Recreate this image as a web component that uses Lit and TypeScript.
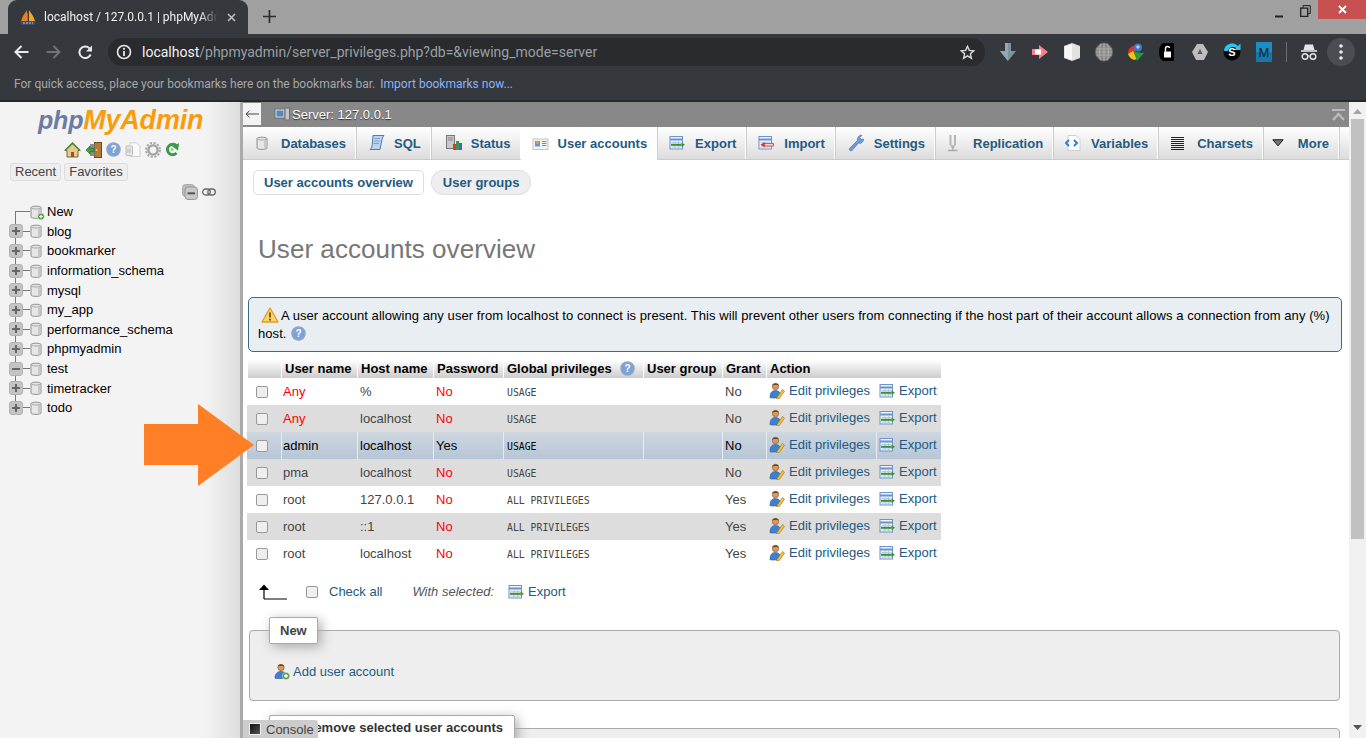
import { LitElement, html, css, svg } from 'lit';
import { customElement } from 'lit/decorators.js';

const box = (w: number, h: number, body: unknown) =>
  html`<svg class="ic" width=${w} height=${h} viewBox="0 0 ${w} ${h}">${body}</svg>`;

// small phpMyAdmin icons, all drawn on a 16 box
const dbShape = svg`<path d="M2 3.5C2 1.8 12 1.8 12 3.5V13C12 14.8 2 14.8 2 13Z" fill="#e6e6e6" stroke="#8f8f8f"/><path d="M2.5 4C4 5.4 10 5.4 11.5 4" fill="none" stroke="#aaa"/><path d="M9 5V13.5L11.5 13V5Z" fill="#c8c8c8"/>`;
const icons: Record<string, unknown> = {
  db: box(16, 16, dbShape),
  dbnew: box(16, 16, svg`${dbShape}<circle cx="12" cy="12.5" r="3.4" fill="#4f9a3a" stroke="#e8f5e0" stroke-width=".7"/><path d="M10.2 12.5H13.8M12 10.7V14.3" stroke="#fff" stroke-width="1.2"/>`),
  sql: box(18, 18, svg`<path d="M5 1.5H16C14.5 3 14 5 13.5 8L12 15.5H2C3.5 14.5 4 12.5 4.3 10Z" fill="#bcd2ee" stroke="#4e79b8"/><path d="M6.5 4.5H12M6 7H11.5M5.5 9.5H11" stroke="#7fa1d2"/>`),
  status: box(18, 18, svg`<rect x="1.5" y="1.5" width="8" height="13" fill="#c9c9c9" stroke="#777"/><path d="M3 4H8M3 6H8" stroke="#888"/><rect x="8" y="10" width="3" height="6" fill="#d33b2c"/><rect x="11" y="7" width="3" height="9" fill="#3b9a42"/><rect x="14" y="9" width="3" height="7" fill="#3b68c9"/>`),
  users: box(17, 16, svg`<path d="M1 3H16V13.5H1Z" fill="#f4f4f4" stroke="#c2c2c2"/><rect x="3" y="5" width="5" height="5.5" fill="#6d93c9"/><circle cx="5.5" cy="6.7" r="1.4" fill="#e0a04d"/><path d="M10 5.5H14.5M10 7.5H14.5M10 9.5H14.5" stroke="#8a8a8a"/>`),
  export: box(16, 16, svg`<rect x="1" y="1.5" width="12.5" height="12.5" fill="#eef3fb" stroke="#6d93c9"/><path d="M1 4.5H13.5" stroke="#6d93c9" stroke-width="2"/><path d="M2.5 7.5H12M2.5 12H12M6 6V13.5M9.5 6V13.5" stroke="#a9c1e2" stroke-width=".8"/><path d="M2 9.8H12.5" stroke="#3f8f2d" stroke-width="2"/><path d="M12.5 7.5L16 9.8L12.5 12Z" fill="#3f8f2d"/>`),
  import: box(16, 16, svg`<rect x="1" y="1.5" width="12.5" height="12.5" fill="#eef3fb" stroke="#6d93c9"/><path d="M1 4.5H13.5" stroke="#6d93c9" stroke-width="2"/><path d="M2.5 7.5H12M2.5 12H12" stroke="#a9c1e2" stroke-width=".8"/><path d="M6 8.6H15.5V11H6Z" fill="#fbe3e0" stroke="#d8352a" stroke-width=".9"/><path d="M6.5 7L2.5 9.8L6.5 12.5Z" fill="#d8352a"/>`),
  settings: box(17, 18, svg`<path d="M1.5 14.5L9.5 6.5C9 3.5 11 1 14 1.2L11.8 3.6L13 5.5L15.4 5C15.8 7.8 13 10 10.5 9L4 16.5C2.5 17.5 .8 16 1.5 14.5Z" fill="#6f9bd8" stroke="#4672ad" stroke-width=".7"/>`),
  replication: box(12, 18, svg`<path d="M3.5 1V11M8 1V11" stroke="#b5b5b5" stroke-width="2"/><path d="M3 11H8.5L7 14H4.5Z" fill="#bbb"/><path d="M5.8 13V16M1 16.5H10.5" stroke="#aaa" stroke-width="1.4"/>`),
  variables: box(16, 18, svg`<path d="M3 1.5H11L15 5V16.5H3Z" fill="#fff" stroke="#cfcfcf"/><path d="M4 6L1 9L4 12M9 6L12 9L9 12" fill="none" stroke="#2f7ee0" stroke-width="2"/>`),
  charsets: box(13, 14, svg`<path d="M0 1.5H13M0 3.5H13M0 5.5H13M0 7.5H13M0 9.5H13M0 11.5H13M0 13.5H13" stroke="#222"/>`),
  more: box(12, 8, svg`<path d="M.8 .8H11.2L6 6.8Z" fill="#777" stroke="#111"/>`),
  edit: box(16, 17, svg`<circle cx="6.5" cy="4.5" r="3.2" fill="#d9995c" stroke="#80532a" stroke-width=".6"/><path d="M3.2 3.6C4 1 9 1 9.8 3.4C7.5 3 5.5 3 3.2 3.6Z" fill="#6e4420"/><path d="M1 15.5C1 10 3.5 8.5 6.5 8.5C9 8.5 11 10 11.5 12L9 16H1.5Z" fill="#3f7fd0" stroke="#2a5a9a" stroke-width=".6"/><path d="M8 15.5L13.5 7.5L15.5 9.2L10 16.8L7.6 17Z" fill="#f3c23e" stroke="#a67a12" stroke-width=".7"/>`),
  adduser: box(16, 17, svg`<circle cx="7" cy="4.5" r="3.2" fill="#d9995c" stroke="#80532a" stroke-width=".6"/><path d="M3.8 3.6C4.6 1 9.4 1 10.2 3.4C8 3 6 3 3.8 3.6Z" fill="#6e4420"/><path d="M1 15C1 10 4 8.5 7 8.5C10 8.5 12 10 12 12V15.5H1.5Z" fill="#3f7fd0" stroke="#2a5a9a" stroke-width=".6"/><circle cx="12" cy="13" r="3.6" fill="#4f9a3a" stroke="#dcefd0" stroke-width=".6"/><path d="M10 13H14M12 11V15" stroke="#fff" stroke-width="1.3"/>`),
  help: box(15, 15, svg`<circle cx="7.5" cy="7.5" r="6.5" fill="#7ba2d8" stroke="#8fa5c4" stroke-width="1.6"/><text x="7.5" y="11" text-anchor="middle" font-family="Liberation Sans" font-size="10" font-weight="700" fill="#fff">?</text>`),
  warn: box(18, 16, svg`<path d="M9 1L17 15H1Z" fill="#f8d86a" stroke="#e59a2d" stroke-width="1.4" stroke-linejoin="round"/><path d="M9 5.5V10.5" stroke="#8a5a10" stroke-width="2"/><circle cx="9" cy="12.7" r="1.1" fill="#8a5a10"/>`),
  home: box(17, 16, svg`<path d="M8.5 1L.8 8.5H3V15H14V8.5H16.2Z" fill="#e9c98e" stroke="#7b5a2a" stroke-width=".9"/><path d="M1 8.5L8.5 1.2L16 8.5" fill="none" stroke="#3e8f3a" stroke-width="1.6"/><rect x="7" y="10" width="3" height="5" fill="#8a5a2a"/>`),
  exit: box(17, 16, svg`<rect x="9.5" y="0.5" width="7" height="15" fill="#b57b35" stroke="#6e4a1e"/><circle cx="11.5" cy="8" r=".9" fill="#eed27a"/><rect x="5" y="2" width="4.5" height="12" fill="#8b8b8b"/><path d="M1 8L5 4V6.3H9V9.7H5V12Z" fill="#3ca23a" stroke="#1f6d1f" stroke-width=".6"/>`),
  docs: box(16, 16, svg`<path d="M5 .8H11.5L15 4V14.5H5Z" fill="#fafafa" stroke="#cfcfcf"/><rect x="1" y="4" width="6.5" height="9.5" rx="1" fill="#e8e8e8" stroke="#bcbcbc"/><path d="M3 6.5V11M5 6.5V11" stroke="#b5b5b5"/>`),
  gear: box(16, 16, svg`<circle cx="8" cy="8" r="4.6" fill="none" stroke="#a2a2a2" stroke-width="2.4"/><circle cx="8" cy="8" r="7" fill="none" stroke="#a8a8a8" stroke-width="2" stroke-dasharray="2.2 1.5"/>`),
  reload: box(14, 15, svg`<path d="M11.5 4A5.2 5.2 0 1 0 11.5 11" fill="none" stroke="#3b9b4a" stroke-width="3"/><path d="M6.5 4.5L13.5 .8V8Z" fill="#3b9b4a" transform="rotate(8 10 5)"/><circle cx="7" cy="7.5" r="1.5" fill="#8ad08e"/>`),
  server: box(16, 16, svg`<rect x="1" y="2" width="10" height="9" fill="#d7e2ee" stroke="#65727f"/><rect x="2.5" y="3.5" width="7" height="6" fill="#5a86b7"/><rect x="11" y="1" width="4.5" height="12" fill="#c4c4c4" stroke="#6f6f6f"/><path d="M3 14H10" stroke="#8a8a8a" stroke-width="2"/>`),
};

// icon, label, extra left padding, active
const tabs: [string, string, number, boolean?][] = [
  ['db', 'Databases', 0], ['sql', 'SQL', 0], ['status', 'Status', 2], ['users', 'User accounts', -1, true],
  ['export', 'Export', 0], ['import', 'Import', 0], ['settings', 'Settings', 1], ['replication', 'Replication', 0],
  ['variables', 'Variables', 0], ['charsets', 'Charsets', 1], ['more', 'More', -3],
];

const dbs: [string, string?][] = [
  ['blog'], ['bookmarker'], ['information_schema'], ['mysql'], ['my_app'],
  ['performance_schema'], ['phpmyadmin'], ['test', 'open'], ['timetracker'], ['todo'],
];

const accounts = [
  { user: 'Any', host: '%', pass: 'No', priv: 'USAGE', grant: 'No' },
  { user: 'Any', host: 'localhost', pass: 'No', priv: 'USAGE', grant: 'No' },
  { user: 'admin', host: 'localhost', pass: 'Yes', priv: 'USAGE', grant: 'No', hover: true },
  { user: 'pma', host: 'localhost', pass: 'No', priv: 'USAGE', grant: 'No' },
  { user: 'root', host: '127.0.0.1', pass: 'No', priv: 'ALL PRIVILEGES', grant: 'Yes' },
  { user: 'root', host: '::1', pass: 'No', priv: 'ALL PRIVILEGES', grant: 'Yes' },
  { user: 'root', host: 'localhost', pass: 'No', priv: 'ALL PRIVILEGES', grant: 'Yes' },
];

@customElement('app-root')
export class AppRoot extends LitElement {
  static styles = css`
    :host {
      display: flex;
      flex-direction: column;
      position: relative;
      width: 1366px;
      height: 738px;
      overflow: hidden;
      font-family: "Liberation Sans", Arial, sans-serif;
      font-size: 13px;
      background: #fff;
    }
    .ic { display: block; flex: none; }

    /* browser chrome */
    .titlebar { display: flex; height: 34px; background: #a0a0a0; flex: none; }
    .tab {
      display: flex;
      align-items: center;
      width: 240px;
      margin-left: 8px;
      padding-left: 12px;
      box-sizing: border-box;
      background: #35383c;
      border-radius: 9px 9px 0 0;
      color: #f1f1f1;
      font: 12px Roboto, sans-serif;
    }
    .tab .title {
      width: 174px;
      margin-left: 8px;
      white-space: nowrap;
      overflow: hidden;
      -webkit-mask-image: linear-gradient(to right, #000 90%, transparent);
    }
    .tab .x { margin-left: 9px; }
    .newtab { margin: 10px 0 0 15px; }
    .winbtns { margin-left: auto; display: flex; align-items: flex-start; }
    .winbtns svg { margin-top: 5px; margin-right: 6px; }
    .winbtns .min { margin-right: 17px; margin-top: 6px; }
    .winbtns .close {
      width: 48px;
      height: 19px;
      margin-left: 1px;
      background: #c75050;
      display: flex;
      align-items: center;
      justify-content: center;
    }
    .winbtns .close svg { margin: 0; }

    .toolbar { display: flex; align-items: center; height: 36px; background: #35383c; flex: none; padding-left: 14px; }
    .nav { display: flex; gap: 17px; align-items: center; }
    .omni {
      display: flex;
      align-items: center;
      width: 877px;
      height: 28px;
      margin-left: 15px;
      padding: 0 10px 0 8px;
      box-sizing: border-box;
      background: #292b2e;
      border-radius: 14px;
      font: 14px Roboto, sans-serif;
      color: #9aa0a6;
      flex: none;
    }
    .omni .url { margin-left: 10px; white-space: nowrap; }
    .omni .url b { font-weight: 400; color: #f1f3f4; }
    .omni .star { margin-left: auto; }
    .exts { display: flex; align-items: center; margin-left: 13px; gap: 12px; }
    .exts .mm { margin-left: 2px; }
    .exts .sep { width: 1px; height: 20px; background: #6b6e72; margin: 0 2px; }
    .menu {
      width: 28px;
      height: 28px;
      border-radius: 50%;
      background: #4a4d51;
      display: flex;
      align-items: center;
      justify-content: center;
      margin-left: -2px;
    }
    .bookmarks {
      height: 32px;
      flex: none;
      box-sizing: border-box;
      padding: 7px 0 0 14px;
      background: #35383c;
      border-bottom: 2px solid #26282b;
      color: #a6a8ab;
      font: 12px Roboto, sans-serif;
    }
    .bookmarks a { color: #8ab4f8; margin-left: 2px; }

    .main { display: flex; flex: 1; min-height: 0; }

    /* navigation panel */
    .side {
      width: 240px;
      flex: none;
      box-sizing: border-box;
      background: linear-gradient(to right, #f3f3f3 85%, #dedede);
      color: #000;
    }
    .logo {
      margin: 1px 0 0 38px;
      font-size: 27px;
      line-height: 34px;
      font-weight: 700;
      font-style: italic;
      letter-spacing: -.2px;
      color: #f89c0e;
    }
    .logo span { color: #6c7aa6; font-size: 25px; }
    .quick { display: flex; gap: 4px; margin: 5px 0 0 64px; }
    .recent { display: flex; gap: 3px; margin: 5px 0 0 10px; }
    .recent span {
      padding: 0 4px;
      height: 16px;
      line-height: 16px;
      font-size: 13px;
      color: #444;
      background: #eee;
      border: 1px solid #ddd;
      border-radius: 3px;
    }
    .collapse { display: flex; align-items: center; gap: 4px; margin: 2px 0 0 182px; height: 17px; }
    .tree { margin-top: 2px; }
    .row {
      display: flex;
      align-items: center;
      height: 19.6px;
      background:
        linear-gradient(#777, #777) 15px 0 / 1px 100% no-repeat,
        linear-gradient(#777, #777) 15px 50% / 15px 1px no-repeat;
    }
    .row.first {
      background:
        linear-gradient(#777, #777) 15px 10px / 1px 100% no-repeat,
        linear-gradient(#777, #777) 15px 50% / 15px 1px no-repeat;
      padding-left: 29px;
    }
    .row.last { background:
        linear-gradient(#777, #777) 15px 0 / 1px 50% no-repeat,
        linear-gradient(#777, #777) 15px 50% / 15px 1px no-repeat; }
    .exp {
      width: 14px;
      height: 14px;
      margin-left: 9px;
      border-radius: 3px;
      background: #c4c4c4;
      border: 1px solid #b2b2b2;
      box-sizing: border-box;
      color: #555;
      flex: none;
      display: flex;
      align-items: center;
      justify-content: center;
    }
    .row .dbi { margin-left: 6px; }
    .row.first .dbi { margin-left: 0; }
    .row .lbl { margin-left: 2px; }

    .resizer { width: 3px; background: #aaa; flex: none; }

    /* right frame */
    .frame { flex: 1; min-width: 0; display: flex; flex-direction: column; }
    .serverbar {
      display: flex;
      align-items: center;
      height: 25px;
      flex: none;
      background: #888;
      color: #fff;
      font-size: 13px;
      text-shadow: 0 1px 1px #333;
    }
    .back {
      width: 18px;
      height: 22px;
      margin-top: -1px;
      background: #f3f3f3;
      color: #444;
      display: flex;
      align-items: center;
      justify-content: center;
    }
    .serverbar .ic { margin: 0 2px 0 13px; }
    .serverbar .top { margin: 0 4px 0 auto; }
    .tabs {
      display: flex;
      height: 33px;
      flex: none;
      box-sizing: border-box;
      background: linear-gradient(#fff, #dcdcdc);
      border-bottom: 1px solid #ccc;
    }
    .tabs a {
      display: flex;
      align-items: center;
      gap: 8px;
      padding: 0 9px 0 12px;
      font-weight: 700;
      color: #235a81;
      border-right: 1px solid #fff;
      box-shadow: 1px 0 0 #ccc;
      white-space: nowrap;
    }
    .tabs a .slot { width: 18px; display: flex; flex: none; }
    .tabs a.active { background: #fff; height: 33px; box-shadow: 1px 0 0 #ccc; }

    .page { flex: 1; min-height: 0; overflow: hidden; padding-left: 4px; }
    .sub { display: flex; gap: 7px; margin: 10px 0 0 6px; }
    .sub a {
      height: 25px;
      line-height: 23px;
      box-sizing: border-box;
      padding: 0 10px;
      font-weight: 700;
      color: #235a81;
      border: 1px solid #ddd;
      border-radius: 5px;
      background: #fff;
    }
    .sub a.pill { background: #eee; border-radius: 12px; padding: 0 11px; }
    h2 {
      margin: 39px 0 0 11px;
      font-size: 26px;
      line-height: 30px;
      font-weight: 400;
      letter-spacing: .05px;
      color: #777;
    }
    .notice {
      box-sizing: border-box;
      width: 1094px;
      height: 55px;
      margin: 33px 0 0 1px;
      padding: 9px 8px 0 9px;
      background: #e8eef1;
      border: 1px solid #3a6c7b;
      border-radius: 5px;
      color: #000;
      line-height: 18px;
      letter-spacing: .065px;
    }
    .notice .ic { display: inline-block; vertical-align: -3px; margin: 0 2px 0 3px; }
    .notice .hlp .ic { margin: 0 0 0 4px; }

    table {
      border-collapse: collapse;
      table-layout: fixed;
      width: 694px;
      margin: 8px 0 0 0;
    }
    th {
      height: 18px;
      box-sizing: border-box;
      padding: 0 0 1px 4px;
      text-align: left;
      font-size: 13px;
      color: #000;
      background: linear-gradient(#fff, #ccc);
      box-shadow: inset 1px 0 0 #fff;
      white-space: nowrap;
      overflow: hidden;
    }
    th .with { display: flex; align-items: center; gap: 8px; }
    td {
      height: 27px;
      padding: 0 0 0 3px;
      box-sizing: border-box;
      color: #444;
      white-space: nowrap;
      background: #fff;
    }
    td.user { padding-left: 2px; }
    tr.even td { background: #ddd; }
    tr.hover td {
      background: linear-gradient(#ced6df, #b6c6d7);
      color: #000;
      box-shadow: inset 1px 0 0 #e4ebf2;
    }
    tr.hover td:first-child { box-shadow: none; }
    td.red, tr.hover td.red { color: #f00; }
    td.mono { font: 9.8px "DejaVu Sans Mono", monospace; padding: 1px 0 0 4px; }
    td a, .foot a { color: #235a81; }
    .act { display: flex; align-items: center; gap: 4px; margin-top: -2px; }
    .cb {
      appearance: none;
      -webkit-appearance: none;
      display: block;
      width: 12px;
      height: 12px;
      margin: 0 0 0 6px;
      box-sizing: border-box;
      background: #eee;
      border: 1px solid #999;
      border-radius: 2px;
    }

    .foot { display: flex; align-items: center; height: 27px; margin: 11px 0 0 12px; }
    .foot .cb { margin: 0 0 0 19px; }
    .foot .ca { margin-left: 11px; }
    .foot i { margin-left: 30px; color: #555; }
    .foot .ex { margin: 0 4px 0 14px; }

    fieldset {
      box-sizing: border-box;
      width: 1091px;
      margin: 12px 0 0 2px;
      padding: 0 0 0 24px;
      background: #eee;
      border: 1px solid #aaa;
      border-radius: 4px;
      min-width: 0;
    }
    legend {
      margin-left: -5px;
      padding: 0 10px;
      height: 27px;
      line-height: 26px;
      box-sizing: border-box;
      font-weight: 700;
      color: #444;
      background: #fff;
      border: 1px solid #aaa;
      border-radius: 2px;
      box-shadow: 3px 3px 12px #aaa;
    }
    .adduser { display: flex; align-items: center; gap: 3px; height: 56px; box-sizing: border-box; padding-bottom: 2px; color: #235a81; }
    .second { margin-top: 14px; height: 60px; }
    .second legend { padding: 0 11px 0 35px; color: #333; line-height: 24px; }

    .scroll { width: 17px; flex: none; background: #f1f1f1; display: flex; flex-direction: column; align-items: center; }
    .scroll .up { margin-top: 7px; }
    .scroll .thumb { width: 13px; height: 420px; margin-top: 5px; background: #c1c1c1; }
    .scroll .down { margin: auto 0 8px; }

    /* things lying over the page */
    .console {
      position: absolute;
      left: 243px;
      bottom: 0;
      width: 75px;
      height: 18px;
      display: flex;
      align-items: center;
      gap: 5px;
      padding-left: 6px;
      box-sizing: border-box;
      background: #ccc;
      color: #444;
      border-radius: 0 3px 0 0;
    }
    .console .sq { width: 12px; height: 12px; background: linear-gradient(135deg, #111, #555); border: 1px solid #eee; box-sizing: border-box; }
    .arrow { position: absolute; left: 144px; top: 404px; }
  `;

  private chrome() {
    const ext = (body: unknown) => box(20, 18, body);
    return html`
      <div class="titlebar">
        <div class="tab">
          ${box(16, 16, svg`<path d="M7 1L3 7L1 12H7Z" fill="#e8821e"/><path d="M9 1L13 7L15 12H9Z" fill="#f5a623"/><path d="M7.5 4V12" stroke="#c9661a"/><path d="M0 12H16L15 16H1Z" fill="#3d4a6b"/><path d="M3 14H13" stroke="#c8cfe0" stroke-dasharray="2 1"/>`)}
          <span class="title">localhost / 127.0.0.1 | phpMyAdmin</span>
          <svg class="x" width="9" height="9" viewBox="0 0 9 9"><path d="M1 1L8 8M8 1L1 8" stroke="#bdc1c6" stroke-width="1.6"/></svg>
        </div>
        <svg class="newtab" width="13" height="13" viewBox="0 0 13 13"><path d="M6.5 0V13M0 6.5H13" stroke="#2b2b2b" stroke-width="1.7"/></svg>
        <div class="winbtns">
          <svg class="min" width="8" height="12" viewBox="0 0 8 12"><path d="M0 10.5H8" stroke="#222" stroke-width="2"/></svg>
          <svg width="11" height="12" viewBox="0 0 11 12"><path d="M.7 3.2H7.7V11.3H.7Z" fill="none" stroke="#222" stroke-width="1.3"/><path d="M3 3V.6H10.3V8.6H8" fill="none" stroke="#222"/></svg>
          <div class="close"><svg width="9" height="9" viewBox="0 0 9 9"><path d="M1 1L8 8M8 1L1 8" stroke="#fff" stroke-width="1.8"/></svg></div>
        </div>
      </div>
      <div class="toolbar">
        <div class="nav">
          <svg width="15" height="14" viewBox="0 0 15 14"><path d="M14.5 7H2M7.5 1L1.5 7L7.5 13" fill="none" stroke="#e8eaed" stroke-width="2"/></svg>
          <svg width="15" height="14" viewBox="0 0 15 14"><path d="M.5 7H13M7.5 1L13.5 7L7.5 13" fill="none" stroke="#6f7276" stroke-width="2"/></svg>
          <svg width="15" height="15" viewBox="0 0 15 15"><path d="M12.6 9.5A5.8 5.8 0 1 1 11.4 3.2" fill="none" stroke="#e8eaed" stroke-width="2"/><path d="M14 .5V6.5H8Z" fill="#e8eaed"/></svg>
        </div>
        <div class="omni">
          <svg width="16" height="16" viewBox="0 0 16 16"><circle cx="8" cy="8" r="6.5" fill="none" stroke="#e8eaed" stroke-width="1.6"/><path d="M8 7V12" stroke="#e8eaed" stroke-width="1.8"/><circle cx="8" cy="4.8" r="1.1" fill="#e8eaed"/></svg>
          <span class="url"><b>localhost</b>/phpmyadmin/server_privileges.php?db=&amp;viewing_mode=server</span>
          <svg class="star" width="15" height="15" viewBox="0 0 15 15"><path d="M7.5 1.3L9.3 5.4L13.8 5.8L10.4 8.8L11.4 13.2L7.5 10.9L3.6 13.2L4.6 8.8L1.2 5.8L5.7 5.4Z" fill="none" stroke="#dadce0" stroke-width="1.4"/></svg>
        </div>
        <div class="exts">
          ${box(20, 20, svg`<path d="M7 1H13V9H18L10 19L2 9H7Z" fill="#7b959e"/><path d="M7 1H10V19L2 9H7Z" fill="#8eabb4"/>`)}
          ${ext(svg`<path d="M2 6H9V2L18 9L9 16V12H2Z" fill="#ff7f86"/><path d="M5 6.5H11V11.5H5Z" fill="#fff"/>`)}
          ${box(20, 20, svg`<path d="M10 1L18 4V16L10 19L2 16V4Z" fill="#e2e2e2"/><path d="M3 4.5L10 2V18L3 15.5Z" fill="#f7f7f7"/>`)}
          ${box(20, 20, svg`<ellipse cx="10" cy="10" rx="8.5" ry="9" fill="#8a8a8a" stroke="#6a6a6a"/><path d="M2 7H18M2 10H18M2 13H18M7 1.5C5 7 5 13 7 18.5M13 1.5C15 7 15 13 13 18.5M10 1V19" stroke="#b3b3b3" stroke-width=".8" fill="none"/>`)}
          ${box(20, 20, svg`<path d="M2 11C2 6 6 4 9 3L11 8L6 14Z" fill="#d8352a"/><path d="M2 12L7 9L11 17L8 18C5 17 3 15 2 12Z" fill="#f0c419"/><path d="M8 10L18 11L11 19Z" fill="#2b9b3a"/><circle cx="12" cy="5.5" r="4" fill="#3a78c9"/><circle cx="12" cy="5" r="1.8" fill="#a8cdf0"/>`)}
          ${box(20, 20, svg`<path d="M5 1H16V19H5C2 17 1 14 1 10C1 6 2 3 5 1Z" fill="#000"/><rect x="6" y="9.5" width="7" height="6" fill="#fff"/><path d="M7.5 9.5V6.5C7.5 4 11.5 4 11.5 6" fill="none" stroke="#fff" stroke-width="1.4"/>`)}
          ${box(20, 20, svg`<path d="M7 2H13L18 10L14 18H6L2 10Z" fill="#bdbdbd"/><path d="M10 7L12.5 12H7.5Z" fill="#555"/>`)}
          ${box(20, 20, svg`<circle cx="10" cy="10" r="8.5" fill="#000"/><path d="M2 9A8 8 0 0 1 16 4L18.5 1.5V8H12L14 6A5 5 0 0 0 6 9Z" fill="#26c6f0"/><text x="10" y="14" text-anchor="middle" font-family="Liberation Sans" font-size="11" font-weight="700" fill="#fff">S</text>`)}
          <svg class="ic mm" width="16" height="20" viewBox="0 0 16 20"><rect width="16" height="20" fill="#1c8ec2"/><rect y="10" width="16" height="10" fill="#1777a8"/><text x="8" y="15" text-anchor="middle" font-family="Liberation Sans" font-size="13" fill="#10242e">M</text></svg>
          <span class="sep"></span>
          ${box(16, 18, svg`<path d="M4 1.5H12L13.5 7H2.5Z" fill="#e3e5e8"/><path d="M0 8H16" stroke="#e3e5e8" stroke-width="1.6"/><circle cx="4" cy="13.5" r="2.8" fill="none" stroke="#e3e5e8" stroke-width="1.4"/><circle cx="12" cy="13.5" r="2.8" fill="none" stroke="#e3e5e8" stroke-width="1.4"/><path d="M6.8 13H9.2" stroke="#e3e5e8"/>`)}
          <div class="menu"><svg width="4" height="16" viewBox="0 0 4 16"><circle cx="2" cy="2" r="1.8" fill="#e8eaed"/><circle cx="2" cy="8" r="1.8" fill="#e8eaed"/><circle cx="2" cy="14" r="1.8" fill="#e8eaed"/></svg></div>
        </div>
      </div>
      <div class="bookmarks">For quick access, place your bookmarks here on the bookmarks bar. <a>Import bookmarks now...</a></div>
    `;
  }

  private sidebar() {
    const mark = (open?: string) => html`<span class="exp">
      <svg width="10" height="10" viewBox="0 0 10 10"><path d=${open ? 'M1 5H9' : 'M1 5H9M5 1V9'} stroke="#666" stroke-width="2"/></svg>
    </span>`;
    return html`
      <nav class="side">
        <div class="logo"><span>php</span>MyAdmin</div>
        <div class="quick">${icons.home}${icons.exit}${icons.help}${icons.docs}${icons.gear}${icons.reload}</div>
        <div class="recent"><span>Recent</span><span>Favorites</span></div>
        <div class="collapse">
          ${box(16, 16, svg`<rect x=".5" y=".5" width="12" height="12" rx="3" fill="#bbb" stroke="#aaa"/><rect x="3" y="3" width="12.5" height="12.5" rx="3" fill="#c8c8c8" stroke="#999"/><path d="M5.5 9.3H13" stroke="#555" stroke-width="2"/>`)}
          ${box(14, 8, svg`<rect x=".7" y="1" width="7.5" height="6" rx="3" fill="none" stroke="#666" stroke-width="1.3"/><rect x="5.8" y="1" width="7.5" height="6" rx="3" fill="none" stroke="#666" stroke-width="1.3"/>`)}
        </div>
        <div class="tree">
          <div class="row first"><span class="dbi">${icons.dbnew}</span><span class="lbl">New</span></div>
          ${dbs.map(([name, open], i) => html`
            <div class="row ${i === dbs.length - 1 ? 'last' : ''}">
              ${mark(open)}
              <span class="dbi">${icons.db}</span>
              <span class="lbl">${name}</span>
            </div>`)}
        </div>
      </nav>
    `;
  }

  private accountsTable() {
    const widths = [34, 76, 76, 70, 140, 79, 44, 110, 65];
    return html`
      <table>
        <colgroup>${widths.map((w) => html`<col style="width:${w}px" />`)}</colgroup>
        <thead>
          <tr>
            <th></th><th>User name</th><th>Host name</th><th>Password</th>
            <th><span class="with">Global privileges ${icons.help}</span></th>
            <th>User group</th><th>Grant</th><th colspan="2">Action</th>
          </tr>
        </thead>
        <tbody>
          ${accounts.map((a, i) => html`
            <tr class="${i % 2 ? 'even' : ''} ${a.hover ? 'hover' : ''}">
              <td><input class="cb" type="checkbox" /></td>
              <td class="user ${a.user === 'Any' ? 'red' : ''}">${a.user}</td>
              <td>${a.host}</td>
              <td class=${a.pass === 'No' ? 'red' : ''}>${a.pass}</td>
              <td class="mono">${a.priv}</td>
              <td></td>
              <td>${a.grant}</td>
              <td><a class="act">${icons.edit}Edit privileges</a></td>
              <td><a class="act">${icons.export}Export</a></td>
            </tr>`)}
        </tbody>
      </table>
    `;
  }

  render() {
    return html`
      ${this.chrome()}
      <div class="main">
        ${this.sidebar()}
        <div class="resizer"></div>
        <div class="frame">
          <div class="serverbar">
            <div class="back"><svg width="14" height="8" viewBox="0 0 14 8"><path d="M14 4H1M4.5 .8L1 4L4.5 7.2" fill="none" stroke="#444"/></svg></div>
            ${icons.server}<span>Server: 127.0.0.1</span>
            <svg class="top" width="13" height="12" viewBox="0 0 13 12"><path d="M0 1H13" stroke="#bbb" stroke-width="2"/><path d="M1 11L6.5 5L12 11" fill="none" stroke="#bbb" stroke-width="2.4"/></svg>
          </div>
          <div class="tabs">
            ${tabs.map(([ic, label, extra, active]) => html`
              <a class=${active ? 'active' : ''} style="padding-left:${12 + extra}px"><span class="slot">${icons[ic]}</span>${label}</a>`)}
          </div>
          <div class="page">
            <div class="sub"><a>User accounts overview</a><a class="pill">User groups</a></div>
            <h2>User accounts overview</h2>
            <div class="notice">${icons.warn}A user account allowing any user from localhost to connect is present. This will prevent other users from connecting if the host part of their account allows a connection from any (%) host.<span class="hlp">${icons.help}</span></div>
            ${this.accountsTable()}
            <div class="foot">
              <svg class="ic" width="28" height="16" viewBox="0 0 28 16"><path d="M5 15H28M5 15V4" fill="none" stroke="#000" stroke-width="1.2"/><path d="M0 6L5 .5L10 6Z" fill="#000"/></svg>
              <input class="cb" type="checkbox" />
              <a class="ca">Check all</a>
              <i>With selected:</i>
              <span class="ex">${icons.export}</span>
              <a>Export</a>
            </div>
            <fieldset>
              <legend>New</legend>
              <div class="adduser">${icons.adduser}Add user account</div>
            </fieldset>
            <fieldset class="second">
              <legend>Remove selected user accounts</legend>
            </fieldset>
          </div>
        </div>
        <div class="scroll">
          <svg class="up" width="9" height="5" viewBox="0 0 9 5"><path d="M0 5L4.5 0L9 5Z" fill="#a3a3a3"/></svg>
          <div class="thumb"></div>
          <svg class="down" width="9" height="5" viewBox="0 0 9 5"><path d="M0 0L4.5 5L9 0Z" fill="#555"/></svg>
        </div>
      </div>
      <div class="console"><span class="sq"></span>Console</div>
      <svg class="arrow" width="110" height="82" viewBox="0 0 110 82"><path d="M0 20H54V0L110 41L54 82V61H0Z" fill="#ff7f27"/></svg>
    `;
  }
}
